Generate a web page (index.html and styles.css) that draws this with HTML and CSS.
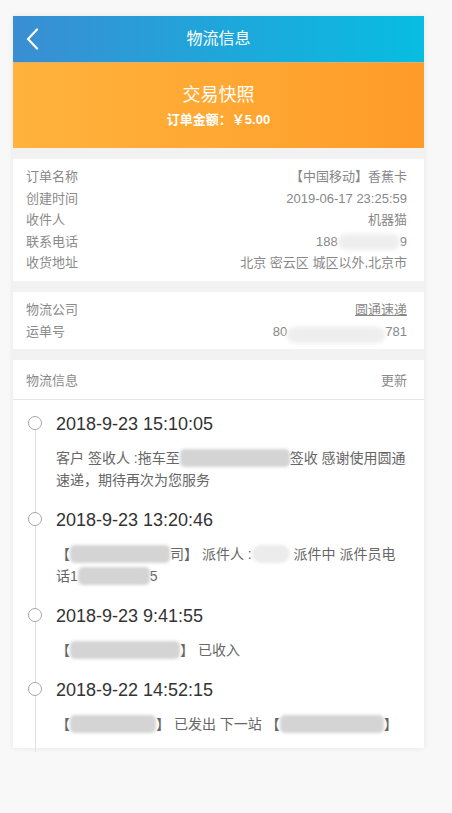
FILE: index.html
```html
<!DOCTYPE html>
<html lang="zh">
<head>
<meta charset="utf-8">
<title>物流信息</title>
<link rel="stylesheet" href="styles.css">
</head>
<body>
<div class="card">
  <header class="topbar">
    <span class="back">
      <svg width="14" height="22" viewBox="0 0 14 22"><path d="M11 1.5 L2 11 L11 20.5" fill="none" stroke="#fff" stroke-width="2.2" stroke-linecap="round" stroke-linejoin="round"/></svg>
    </span>
    <h1 class="title">物流信息</h1>
    <span></span>
  </header>
  <section class="snapshot">
    <div class="snap-title">交易快照</div>
    <div class="snap-amount">订单金额：￥5.00</div>
  </section>
  <div class="sep"></div>
  <section class="info">
    <div class="row"><span>订单名称</span><span class="val">【中国移动】香蕉卡</span></div>
    <div class="row"><span>创建时间</span><span class="val">2019-06-17 23:25:59</span></div>
    <div class="row"><span>收件人</span><span class="val">机器猫</span></div>
    <div class="row"><span>联系电话</span><span class="val">188<span class="blob blob-phone"></span>9</span></div>
    <div class="row"><span>收货地址</span><span class="val">北京 密云区 城区以外,北京市</span></div>
  </section>
  <div class="sep"></div>
  <section class="info">
    <div class="row"><span>物流公司</span><span class="val link">圆通速递</span></div>
    <div class="row"><span>运单号</span><span class="val">80<span class="blob blob-waybill"></span>781</span></div>
  </section>
  <div class="sep"></div>
  <div class="list-head"><span>物流信息</span><span>更新</span></div>
  <ol class="timeline">
    <li class="item">
      <span class="dot"></span>
      <div class="body">
        <div class="time">2018-9-23 15:10:05</div>
        <p class="desc">客户 签收人 :拖车至<span class="mask" style="width:110px"></span>签收 感谢使用圆通速递，期待再次为您服务</p>
      </div>
    </li>
    <li class="item">
      <span class="dot"></span>
      <div class="body">
        <div class="time">2018-9-23 13:20:46</div>
        <p class="desc">【<span class="mask" style="width:100px"></span>司】 派件人 :<span class="mask light" style="width:38px"></span> 派件中 派件员电话1<span class="mask" style="width:72px"></span>5</p>
      </div>
    </li>
    <li class="item">
      <span class="dot"></span>
      <div class="body">
        <div class="time">2018-9-23 9:41:55</div>
        <p class="desc">【<span class="mask" style="width:110px"></span>】 已收入</p>
      </div>
    </li>
    <li class="item">
      <span class="dot"></span>
      <div class="body">
        <div class="time">2018-9-22 14:52:15</div>
        <p class="desc">【<span class="mask" style="width:86px"></span>】 已发出 下一站 【<span class="mask" style="width:104px"></span>】</p>
      </div>
    </li>
  </ol>
</div>
</body>
</html>
```

FILE: styles.css
```css
* { box-sizing: border-box; }
html, body { margin: 0; padding: 0; }
body {
  background: #f8f8f8;
  font-family: "Liberation Sans", "Noto Sans CJK SC", sans-serif;
  padding: 16px 0 40px 13px;
}
.card {
  width: 411px;
  background: #fff;
  box-shadow: 0 0 6px rgba(0, 0, 0, 0.08);
}
.topbar {
  height: 46px;
  display: grid;
  grid-template-columns: 44px 1fr 44px;
  align-items: center;
  background: linear-gradient(90deg, #3a8ed3 0%, #1fa6da 50%, #08bde1 100%);
  color: #fff;
}
.back { display: flex; align-items: center; padding-left: 13px; height: 46px; }
.title {
  margin: 0;
  text-align: center;
  font-size: 16px;
  font-weight: normal;
  line-height: 46px;
}
.snapshot {
  height: 86px;
  display: flex;
  flex-direction: column;
  align-items: center;
  justify-content: center;
  gap: 2px;
  color: #fff;
  background: linear-gradient(90deg, #ffb33c 0%, #ffa833 50%, #ff9b29 100%);
  border-top: 1px solid #d9b27a;
}
.snap-title { font-size: 18px; line-height: 26px; }
.snap-amount { font-size: 13px; line-height: 20px; font-weight: bold; }
.sep { height: 11px; background: #f2f2f2; }
.info { padding: 7px 17px 7px 13px; }
.row {
  display: flex;
  justify-content: space-between;
  align-items: center;
  height: 21.6px;
  font-size: 13px;
  line-height: 21.6px;
  color: #8a8a8a;
}
.val { color: #888; display: inline-flex; align-items: center; height: 21.6px; }
.link { text-decoration: underline; }
.blob {
  display: inline-block;
  height: 16px;
  background: #eeeeee;
  border-radius: 8px;
  filter: blur(2px);
}
.blob-phone { width: 62px; }
.blob-waybill { width: 98px; transform: translateY(4px); }
.list-head {
  height: 40px;
  display: flex;
  justify-content: space-between;
  align-items: center;
  padding: 0 17px 0 13px;
  font-size: 13px;
  color: #8a8a8a;
  border-bottom: 1px solid #e6e6e6;
}
.timeline {
  list-style: none;
  margin: 0;
  padding: 11px 17px 0 0;
  position: relative;
}
.timeline::before {
  content: "";
  position: absolute;
  left: 22px;
  top: 30px;
  bottom: -4px;
  width: 1px;
  background: #e2e2e2;
}
.item {
  display: grid;
  grid-template-columns: 43px 1fr;
  padding-bottom: 16px;
}
.item:last-child { padding-bottom: 13px; }
.dot {
  position: relative;
  width: 14px;
  height: 14px;
  margin: 5px 0 0 15px;
  border: 1.5px solid #a8a8a8;
  border-radius: 50%;
  background: #fff;
}
.time {
  font-size: 18px;
  line-height: 26px;
  color: #333;
  margin-bottom: 10px;
}
.desc {
  margin: 0;
  font-size: 14px;
  line-height: 22px;
  color: #666;
}
.mask {
  display: inline-block;
  height: 18px;
  vertical-align: -4px;
  background: #d4d4d4;
  border-radius: 5px;
  filter: blur(1.5px);
}
.mask.light { background: #ececec; border-radius: 9px; }
```
